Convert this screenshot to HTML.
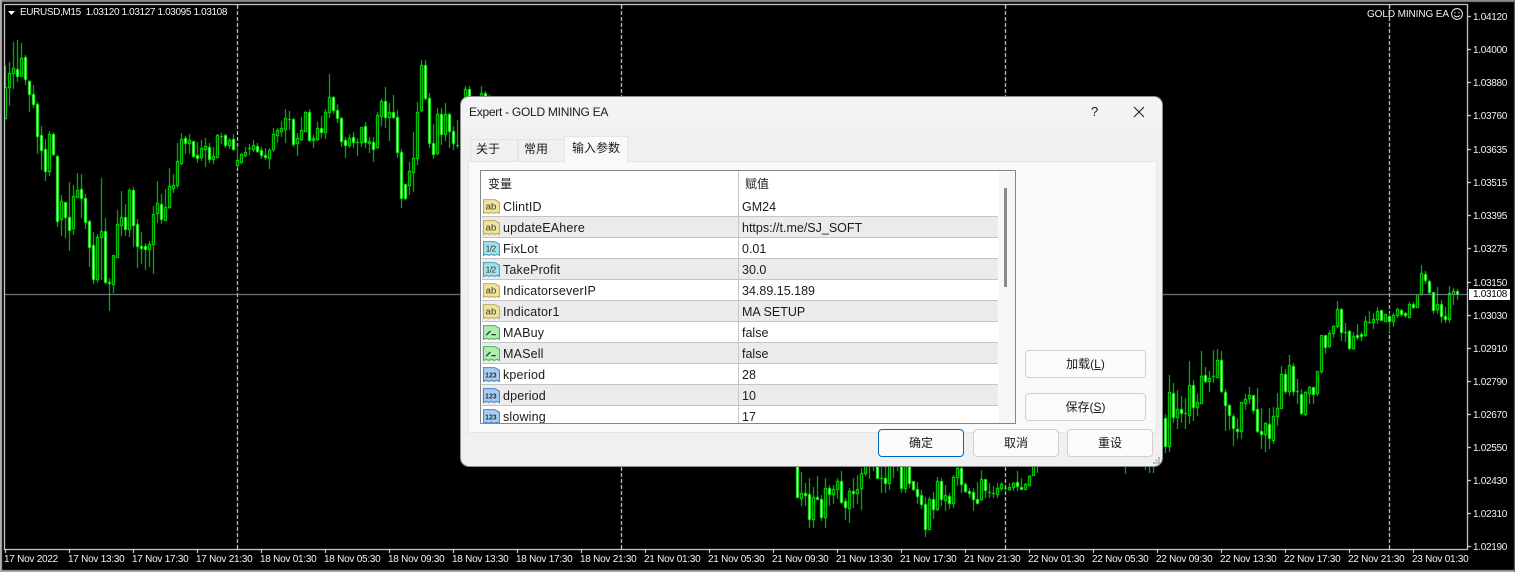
<!DOCTYPE html>
<html><head><meta charset="utf-8"><style>
html,body{margin:0;padding:0;background:#000;width:1515px;height:572px;overflow:hidden}
body{position:relative;font-family:"Liberation Sans","Noto Sans CJK SC",sans-serif}
canvas{position:absolute;left:0;top:0}
.t{position:absolute;color:#f0f4fa;font-size:10px;line-height:12px;white-space:pre;letter-spacing:-.3px}
.p{left:1473px}
.b{top:554px;letter-spacing:-.25px}
#dlg{position:absolute;left:461px;top:97px;width:701px;height:369px;background:#f0f0f0;border-radius:8px;overflow:hidden;color:#1a1a1a;font-size:12px;box-shadow:0 0 0 1px #8d8d8d}
#dlg div,#dlg span,#dlg svg{position:absolute;white-space:nowrap}
#tb{left:0;top:0;width:701px;height:30px;background:#f3f3f6}
.tab{background:#f0f0f0;border:1px solid #e5e5e5;border-bottom:0;text-align:left;padding-left:5px;line-height:19px;box-sizing:border-box}
#panel{left:7px;top:64px;width:689px;height:272px;background:#f9f9f9;border:1px solid #e5e5e5;box-sizing:border-box}
#list{left:19px;top:73px;width:536px;height:254px;background:#fff;border:1px solid #82878f;box-sizing:border-box;overflow:hidden}
.r{left:1px;width:516px;height:21px;border-bottom:1px solid #c4c4c4;box-sizing:border-box}
.a{background:#ebebeb}
.n{left:21px;top:3px;line-height:16px;font-size:12.5px;letter-spacing:.17px}
.v{left:260px;top:3px;line-height:16px;font-size:12.5px}
.r svg{left:1px;top:2px;width:17px;height:17px}
.btn{background:#fbfbfb;border:1px solid #d0d0d0;border-radius:4px;box-sizing:border-box;text-align:center;line-height:26px;font-size:12px}
svg text{font-family:"Liberation Sans",sans-serif;font-size:9px;fill:#3a3a2a}
</style></head><body>
<canvas id="c" width="1515" height="572"></canvas>

<svg style="position:absolute;left:8px;top:10px" width="8" height="6"><path d="M0 1H7L3.500 5Z" fill="#fff"/></svg>
<span class="t" style="left:20px;top:7px;letter-spacing:-.37px">EURUSD,M15  1.03120 1.03127 1.03095 1.03108</span>
<span class="t" style="left:1367px;top:9px;letter-spacing:-.1px">GOLD MINING EA</span>
<svg style="position:absolute;left:1451px;top:8px" width="12" height="12" viewBox="0 0 12 12" fill="none" stroke="#f0f4fa"><circle cx="6" cy="6" r="5.400"/><path d="M3 7.500Q6 10 9 7.500"/><path d="M4 4v1.200M8 4v1.200"/></svg>

<span class="t p" style="top:12px">1.04120</span><span class="t p" style="top:45px">1.04000</span><span class="t p" style="top:78px">1.03880</span><span class="t p" style="top:111px">1.03760</span><span class="t p" style="top:145px">1.03635</span><span class="t p" style="top:178px">1.03515</span><span class="t p" style="top:211px">1.03395</span><span class="t p" style="top:244px">1.03275</span><span class="t p" style="top:278px">1.03150</span><span class="t p" style="top:311px">1.03030</span><span class="t p" style="top:344px">1.02910</span><span class="t p" style="top:377px">1.02790</span><span class="t p" style="top:410px">1.02670</span><span class="t p" style="top:443px">1.02550</span><span class="t p" style="top:476px">1.02430</span><span class="t p" style="top:509px">1.02310</span><span class="t p" style="top:542px">1.02190</span>
<div style="position:absolute;left:1469px;top:289px;width:41px;height:11px;background:#fff"></div>
<span class="t p" style="top:289px;color:#000">1.03108</span>

<span class="t b" style="left:4px">17 Nov 2022</span><span class="t b" style="left:68px">17 Nov 13:30</span><span class="t b" style="left:132px">17 Nov 17:30</span><span class="t b" style="left:196px">17 Nov 21:30</span><span class="t b" style="left:260px">18 Nov 01:30</span><span class="t b" style="left:324px">18 Nov 05:30</span><span class="t b" style="left:388px">18 Nov 09:30</span><span class="t b" style="left:452px">18 Nov 13:30</span><span class="t b" style="left:516px">18 Nov 17:30</span><span class="t b" style="left:580px">18 Nov 21:30</span><span class="t b" style="left:644px">21 Nov 01:30</span><span class="t b" style="left:708px">21 Nov 05:30</span><span class="t b" style="left:772px">21 Nov 09:30</span><span class="t b" style="left:836px">21 Nov 13:30</span><span class="t b" style="left:900px">21 Nov 17:30</span><span class="t b" style="left:964px">21 Nov 21:30</span><span class="t b" style="left:1028px">22 Nov 01:30</span><span class="t b" style="left:1092px">22 Nov 05:30</span><span class="t b" style="left:1156px">22 Nov 09:30</span><span class="t b" style="left:1220px">22 Nov 13:30</span><span class="t b" style="left:1284px">22 Nov 17:30</span><span class="t b" style="left:1348px">22 Nov 21:30</span><span class="t b" style="left:1412px">23 Nov 01:30</span>

<div id="dlg">
 <div id="tb"></div>
 <span style="left:8px;top:7px;line-height:16px;font-size:12px;letter-spacing:-.27px">Expert - GOLD MINING EA</span>
 <span style="left:630px;top:7px;line-height:16px;font-size:13px">?</span>
 <svg style="left:672px;top:9px" width="12" height="12" fill="none" stroke="#222" stroke-width="1.100"><path d="M1 1L11 11M11 1L1 11"/></svg>

 <div id="panel"></div>
 <div class="tab" style="left:9px;top:42px;width:48px;height:22px">关于</div>
 <div class="tab" style="left:57px;top:42px;width:47px;height:22px">常用</div>
 <div class="tab" style="left:103px;top:39px;width:64px;height:26px;background:#f9f9f9;padding-left:7px;line-height:22px;z-index:2">输入参数</div>

 <div id="list">
  <span style="left:7px;top:5px;line-height:16px">变量</span>
  <span style="left:264px;top:5px;line-height:16px">赋值</span>
  <div style="left:257px;top:0;width:1px;height:254px;background:#c8c8c8;z-index:3"></div>
  <div style="left:518px;top:0;width:16px;height:252px;background:#f6f6f6"></div>
  <div style="left:523px;top:17px;width:3px;height:99px;background:#8a8a8a"></div>

  <div class="r" style="top:25px"><svg viewBox="0 0 16 16"><path d="M.5 1.500H11L15.500 4V14.500L13 13.500 10.500 14.500 8 13.500 5.500 14.500 3 13.500 .5 14.500Z" fill="#f0e49e" stroke="#bfae5c"/><text x="2.500" y="11">ab</text></svg><span class="n">ClintID</span><span class="v">GM24</span></div>
  <div class="r a" style="top:46px"><svg viewBox="0 0 16 16"><path d="M.5 1.500H11L15.500 4V14.500L13 13.500 10.500 14.500 8 13.500 5.500 14.500 3 13.500 .5 14.500Z" fill="#f0e49e" stroke="#bfae5c"/><text x="2.500" y="11">ab</text></svg><span class="n">updateEAhere</span><span class="v">https://t.me/SJ_SOFT</span></div>
  <div class="r" style="top:67px"><svg viewBox="0 0 16 16"><path d="M.5 1.500H11L15.500 4V14.500L13 13.500 10.500 14.500 8 13.500 5.500 14.500 3 13.500 .5 14.500Z" fill="#a2e2ec" stroke="#4f9fb4"/><text x="2.500" y="11" style="font-size:8px;letter-spacing:-.6px">1/2</text></svg><span class="n">FixLot</span><span class="v">0.01</span></div>
  <div class="r a" style="top:88px"><svg viewBox="0 0 16 16"><path d="M.5 1.500H11L15.500 4V14.500L13 13.500 10.500 14.500 8 13.500 5.500 14.500 3 13.500 .5 14.500Z" fill="#a2e2ec" stroke="#4f9fb4"/><text x="2.500" y="11" style="font-size:8px;letter-spacing:-.6px">1/2</text></svg><span class="n">TakeProfit</span><span class="v">30.0</span></div>
  <div class="r" style="top:109px"><svg viewBox="0 0 16 16"><path d="M.5 1.500H11L15.500 4V14.500L13 13.500 10.500 14.500 8 13.500 5.500 14.500 3 13.500 .5 14.500Z" fill="#f0e49e" stroke="#bfae5c"/><text x="2.500" y="11">ab</text></svg><span class="n">IndicatorseverIP</span><span class="v">34.89.15.189</span></div>
  <div class="r a" style="top:130px"><svg viewBox="0 0 16 16"><path d="M.5 1.500H11L15.500 4V14.500L13 13.500 10.500 14.500 8 13.500 5.500 14.500 3 13.500 .5 14.500Z" fill="#f0e49e" stroke="#bfae5c"/><text x="2.500" y="11">ab</text></svg><span class="n">Indicator1</span><span class="v">MA SETUP</span></div>
  <div class="r" style="top:151px"><svg viewBox="0 0 16 16"><path d="M.5 1.500H11L15.500 4V14.500L13 13.500 10.500 14.500 8 13.500 5.500 14.500 3 13.500 .5 14.500Z" fill="#aeeeb0" stroke="#4fae5f"/><path d="M3 10.500L7 6.500M8 10H12" fill="none" stroke="#1d3a2a" stroke-width="1.200"/></svg><span class="n">MABuy</span><span class="v">false</span></div>
  <div class="r a" style="top:172px"><svg viewBox="0 0 16 16"><path d="M.5 1.500H11L15.500 4V14.500L13 13.500 10.500 14.500 8 13.500 5.500 14.500 3 13.500 .5 14.500Z" fill="#aeeeb0" stroke="#4fae5f"/><path d="M3 10.500L7 6.500M8 10H12" fill="none" stroke="#1d3a2a" stroke-width="1.200"/></svg><span class="n">MASell</span><span class="v">false</span></div>
  <div class="r" style="top:193px"><svg viewBox="0 0 16 16"><path d="M.5 1.500H11L15.500 4V14.500L13 13.500 10.500 14.500 8 13.500 5.500 14.500 3 13.500 .5 14.500Z" fill="#a8cdf0" stroke="#4d86c0"/><text x="2" y="11" style="font-size:6.500px;font-weight:bold;fill:#234">123</text></svg><span class="n">kperiod</span><span class="v">28</span></div>
  <div class="r a" style="top:214px"><svg viewBox="0 0 16 16"><path d="M.5 1.500H11L15.500 4V14.500L13 13.500 10.500 14.500 8 13.500 5.500 14.500 3 13.500 .5 14.500Z" fill="#a8cdf0" stroke="#4d86c0"/><text x="2" y="11" style="font-size:6.500px;font-weight:bold;fill:#234">123</text></svg><span class="n">dperiod</span><span class="v">10</span></div>
  <div class="r" style="top:235px"><svg viewBox="0 0 16 16"><path d="M.5 1.500H11L15.500 4V14.500L13 13.500 10.500 14.500 8 13.500 5.500 14.500 3 13.500 .5 14.500Z" fill="#a8cdf0" stroke="#4d86c0"/><text x="2" y="11" style="font-size:6.500px;font-weight:bold;fill:#234">123</text></svg><span class="n">slowing</span><span class="v">17</span></div>
 </div>

 <div class="btn" style="left:564px;top:253px;width:121px;height:28px">加载(<u>L</u>)</div>
 <div class="btn" style="left:564px;top:296px;width:121px;height:28px">保存(<u>S</u>)</div>
 <div class="btn" style="left:417px;top:332px;width:86px;height:28px;border-color:#0067c0">确定</div>
 <div class="btn" style="left:512px;top:332px;width:86px;height:28px">取消</div>
 <div class="btn" style="left:606px;top:332px;width:86px;height:28px">重设</div>
 <svg style="left:692px;top:360px" width="8" height="8" fill="#b4b4b4"><rect x="5" y="0" width="2" height="2"/><rect x="2.500" y="2.500" width="2" height="2"/><rect x="5" y="2.500" width="2" height="2"/><rect x="0" y="5" width="2" height="2"/><rect x="2.500" y="5" width="2" height="2"/><rect x="5" y="5" width="2" height="2"/></svg>
</div>

<script>
var g=document.getElementById('c').getContext('2d');
function R(c,x,y,w,h){g.fillStyle=c;g.fillRect(x,y,w,h)}
R('#000',0,0,1515,572);
R('#8a8a8a',0,0,1515,2);R('#b0b0b0',0,0,2,572);R('#a8a8a8',0,570,1515,2);R('#6a6a6a',1514,0,1,572);
[237,621,1005,1389].forEach(function(x){for(var y=5;y<549;y+=6)R('#fff',x,y,1,4)});
var S=[[5,
66,118,87,118,0, 62,105,73,87,0, 42,88,68,73,0, 40,81,69,76,1, 43,76,58,76,0, 55,84,57,79,1, 80,111,81,94,1, 85,107,94,104,1, 102,153,104,136,1, 126,169,135,150,1, 139,180,149,171,1, 131,175,134,171,0, 132,155,134,154,1, 155,226,156,221,1, 195,235,201,219,0, 202,237,202,217,1, 182,250,217,230,1, 185,234,196,228,0, 173,197,190,197,0, 174,217,189,198,1, 194,228,198,222,1, 220,266,221,247,1, 232,283,245,279,1, 234,282,237,279,0, 178,279,231,237,0, 218,283,231,282,1, 278,310,282,283,1, 255,292,255,284,0, 210,257,224,257,0, 191,235,217,225,0, 204,235,217,229,1, 188,236,190,229,0, 187,246,190,225,1, 219,267,224,246,1, 232,263,246,248,1, 243,269,246,249,1, 241,266,244,249,0, 206,273,214,244,0, 181,222,203,213,0, 194,223,204,219,1, 189,220,207,220,0, 168,208,186,207,0, 174,192,185,188,0, 143,187,161,185,0, 133,164,139,163,0, 136,153,138,143,1, 134,153,140,143,0, 141,157,141,156,1, 142,162,155,158,1, 140,160,148,157,0, 138,166,146,149,0, 143,162,147,159,1, 147,163,156,159,0, 134,157,135,157,0, 133,143,136,136,1, 134,147,135,145,1, 138,148,140,145,0, 134,150,139,149,1, 148,167,160,165,0,
153,163,154,162,0, 147,156,152,155,0, 144,154,148,148,1, 140,151,145,149,0, 143,152,146,151,1, 147,158,150,155,1, 148,159,155,157,1, 148,168,150,158,0, 128,151,134,149,0, 128,142,130,135,0, 121,136,128,131,0, 109,142,118,129,0, 111,129,119,119,1, 118,146,119,144,1, 133,155,138,143,0, 117,140,130,139,0, 111,131,112,131,0, 109,141,112,140,1, 135,147,138,140,0, 122,140,128,139,0, 116,137,128,132,1, 109,138,112,132,0, 74,117,97,112,0, 96,113,97,110,1, 104,122,110,118,1, 117,146,118,141,1, 137,157,140,145,1, 134,147,138,145,0, 132,147,137,142,1, 138,155,142,142,1, 127,146,127,142,0, 122,147,126,142,1, 137,152,141,143,0, 137,161,142,149,1, 112,148,115,147,0, 99,125,101,116,0, 87,127,101,117,1, 103,140,112,117,0, 95,118,112,117,1, 110,157,117,152,1, 149,207,152,198,1, 184,199,184,198,1, 162,194,171,185,0, 132,191,158,172,0, 102,164,112,158,0, 60,111,65,110,0, 60,99,65,98,1, 93,147,98,143,1, 124,158,143,154,1, 108,154,114,153,0, 108,144,114,134,1, 103,140,114,134,0, 113,147,114,131,1, 126,149,131,143,1, 120,147,145,145,0],
[465,86,120,89,120,0, 86,120,89,120,1, 100,120,100,120,1, 100,120,100,120,1, 86,120,93,120,0, 91,120,93,120,1, 95,120,120,120,1],
[797,440,497,440,497,1, 472,505,493,498,0, 483,505,493,495,1, 478,527,494,519,1, 487,527,497,519,0, 476,499,497,499,1, 495,520,499,517,1, 478,527,488,517,0, 485,505,488,494,1, 485,503,489,494,0, 478,498,481,489,0, 471,503,481,502,1, 498,519,501,507,1, 488,522,491,508,0, 478,507,491,493,1, 475,503,489,493,0, 468,509,473,488,0, 440,475,440,473,0, 440,478,440,460,0, 440,470,440,460,0, 440,478,440,478,1, 440,492,478,478,1, 440,492,478,483,1, 440,489,440,483,0, 440,477,440,440,1, 440,470,440,440,1, 440,492,440,488,1, 440,492,440,488,0, 440,487,440,483,1, 482,490,481,489,1, 482,503,489,496,1, 490,508,495,504,1, 497,536,504,529,1, 497,529,499,529,0, 492,518,499,509,1, 477,510,481,509,0, 478,505,481,499,1, 485,510,495,500,0, 493,508,496,503,1, 475,507,477,503,0, 460,485,468,477,0, 460,492,468,484,1, 482,492,484,491,1, 488,497,491,493,1, 488,510,492,499,1, 482,503,499,503,1, 470,500,479,499,0, 479,497,479,490,1, 483,497,492,492,1, 486,497,493,493,1, 483,497,488,494,0, 482,490,484,488,0, 488,491,488,488,1, 483,490,487,489,0, 482,490,483,487,0, 471,490,482,486,1, 478,489,487,489,1, 483,489,484,489,0, 475,485,476,485,0, 460,475,460,475,0, 460,472,460,460,0],
[1125,460,473,460,460,1],[1145,460,469,460,460,1, 460,472,460,465,0, 460,472,460,460,1],
[1165,414,452,418,446,1, 375,451,392,446,0, 383,422,393,417,1, 390,428,409,417,0, 396,422,409,413,1, 398,428,413,413,1, 361,423,385,415,0, 380,420,385,407,1, 394,415,402,407,0, 351,403,376,403,0, 367,382,375,381,1, 371,391,378,381,0, 350,382,376,376,1, 349,377,360,377,0, 351,392,360,391,1, 389,430,392,405,1, 404,429,405,415,1, 414,445,416,428,1, 418,438,429,431,1, 402,438,402,431,0, 394,409,399,403,0, 387,403,395,398,0, 395,413,395,410,1, 388,432,409,431,1, 408,448,431,434,1, 422,451,423,434,0, 408,448,424,438,1, 407,443,416,440,0, 393,425,408,416,0, 366,408,374,408,0, 369,393,374,391,1, 355,395,365,391,0, 363,395,366,391,1, 379,403,391,391,1, 389,414,394,413,1, 391,415,392,414,0, 386,403,387,393,0, 387,403,387,394,1, 371,395,371,393,0, 335,373,335,371,0, 335,353,335,347,1, 330,347,333,346,0, 325,337,326,333,0, 301,327,309,326,0, 308,340,309,332,1, 323,341,332,332,1, 330,349,331,348,1, 332,349,336,348,0, 324,339,335,337,1, 332,340,334,336,1, 316,336,321,335,0, 311,323,322,322,1, 313,328,319,322,0, 307,323,311,319,0, 310,320,310,320,1, 314,321,314,321,0, 313,331,316,321,1, 313,326,315,321,0, 308,317,309,315,0, 309,316,310,314,1, 312,317,313,315,1, 302,317,304,317,0, 302,308,304,307,1, 294,307,294,307,0, 265,295,273,294,0, 271,283,274,280,1, 280,293,281,292,1, 292,313,292,310,1, 287,313,304,309,0, 300,322,304,316,1, 307,322,316,319,1, 286,322,293,319,0, 288,304,291,294,0, 289,299,291,294,1]
];
S.forEach(function(s){var x=s[0];for(var i=1;i<s.length;i+=5){var h=s[i],l=s[i+1],t=s[i+2],b=s[i+3],f=s[i+4];
 R('#00e000',x,h,1,l-h+1);
 R('#00ff00',x-1,t,3,b-t+1);
 if(b-t>=2)R(f?'#fff':'#000',x,t+1,1,b-t-1);
 x+=4}});
R('#8794a3',4,294,1464,1);
R('#fff',4,4,1464,1);R('#fff',4,4,1,546);R('#fff',1467,4,1,546);R('#fff',4,549,1464,1);
[16,49,82,115,149,182,215,248,282,315,348,381,414,447,480,513,546].forEach(function(y){R('#fff',1468,y,3,1)});
for(var x=5;x<1467;x+=64)R('#fff',x,550,1,3);
</script>
</body></html>
